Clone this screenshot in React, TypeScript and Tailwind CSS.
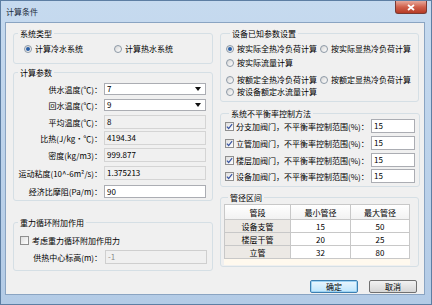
import React from 'react';

type FieldKind = 'combo' | 'edit' | 'ro' | 'disabled';

const Radio = ({ checked = false }: { checked?: boolean }) => (
  <span className="w-[8px] h-[8px] shrink-0 rounded-full border border-[#8d99a6] bg-gradient-to-br from-[#d6d6d6] to-white flex items-center justify-center">
    {checked && <span className="w-[4px] h-[4px] rounded-full bg-[#2a5fa6]" />}
  </span>
);

const CheckBox = ({ checked = false }: { checked?: boolean }) => (
  <span className="w-[9px] h-[9px] shrink-0 border border-[#8f8f8f] bg-gradient-to-br from-[#dedede] to-white flex items-center justify-center">
    {checked && (
      <svg viewBox="0 0 8 8" className="w-[7px] h-[7px]">
        <path d="M1 4.2 L3 6.3 L7 1.2" stroke="#3a56a3" strokeWidth="1.4" fill="none" />
      </svg>
    )}
  </span>
);

const Field = ({ value, kind, className = '' }: { value: string; kind: FieldKind; className?: string }) => {
  const look =
    kind === 'combo' || kind === 'edit'
      ? 'bg-white border-[#abadb3] text-black'
      : kind === 'ro'
        ? 'bg-[#f0f0f0] border-[#d4d4d4] text-black'
        : 'bg-[#f0f0f0] border-[#cfcfcf] text-[#8a8a8a]';
  return (
    <div className={`border flex items-center pl-[2px] pr-[4px] ${look} ${className}`}>
      <span className="flex-1 leading-[10px]">{value}</span>
      {kind === 'combo' && (
        <svg viewBox="0 0 6 4" className="w-[6px] h-[4px]">
          <path d="M0 0 H6 L3 4 Z" fill="#111" />
        </svg>
      )}
    </div>
  );
};

const Group = ({ title, className = '', children }: { title: string; className?: string; children?: React.ReactNode }) => (
  <fieldset className={`border border-[#d5dfe5] rounded-[3px] ${className}`}>
    <legend className="ml-[4px] px-[2px] leading-[11px]">{title}</legend>
    {children}
  </fieldset>
);

const params = [
  { label: '供水温度(℃)：', value: '7', kind: 'combo' as FieldKind, mt: 'mt-[5px]', h: 'h-[12px]' },
  { label: '回水温度(℃)：', value: '9', kind: 'combo' as FieldKind, mt: 'mt-[4px]', h: 'h-[12px]' },
  { label: '平均温度(℃)：', value: '8', kind: 'ro' as FieldKind, mt: 'mt-[4px]', h: 'h-[14px]' },
  { label: '比热(J/kg·℃)：', value: '4194.34', kind: 'ro' as FieldKind, mt: 'mt-[2px]', h: 'h-[14px]' },
  { label: '密度(kg/m3)：', value: '999.877', kind: 'ro' as FieldKind, mt: 'mt-[3px]', h: 'h-[14px]' },
  { label: '运动粘度(10^-6m²/s)：', value: '1.375213', kind: 'ro' as FieldKind, mt: 'mt-[4px]', h: 'h-[14px]' },
  { label: '经济比摩阻(Pa/m)：', value: '90', kind: 'edit' as FieldKind, mt: 'mt-[5px]', h: 'h-[13px]' },
];

const valves = [
  { name: '分支加阀门', mt: 'mt-0' },
  { name: '立管加阀门', mt: 'mt-[3px]' },
  { name: '楼层加阀门', mt: 'mt-[3px]' },
  { name: '设备加阀门', mt: 'mt-[2px]' },
];

const pipes = [
  { seg: '设备支管', min: '15', max: '50' },
  { seg: '楼层干管', min: '20', max: '25' },
  { seg: '立管', min: '32', max: '80' },
];

export default function App() {
  return (
    <div className="w-[432px] h-[305px] border border-[#5d7ea3] bg-gradient-to-b from-[#c6daef] to-[#b3cbe6] flex flex-col text-[8px] text-black font-['Noto_Sans_CJK_SC','Noto_Sans',sans-serif]">
      {/* Title bar */}
      <div className="h-[21px] flex items-start justify-between shrink-0">
        <span className="ml-[5px] mt-[5px] leading-[11px] text-[#1b2a3c]">计算条件</span>
        <div className="w-[32px] h-[13px] mr-[4px] rounded-b-[3px] border border-t-0 border-[#7a3a33] bg-gradient-to-b from-[#e6a89b] via-[#d0604b] to-[#b63a25] flex items-center justify-center">
          <svg viewBox="0 0 8 7" className="w-[8px] h-[7px]">
            <path d="M1 1 L7 6 M7 1 L1 6" stroke="white" strokeWidth="1.8" />
          </svg>
        </div>
      </div>

      {/* Client area */}
      <div className="flex-1 ml-[4px] mr-[6px] mb-[9px] border border-[#8aa4c2] bg-[#f0f0f0] flex pt-[5px] pl-[7px] gap-[7px]">
        {/* Left column */}
        <div className="w-[200px] flex flex-col">
          <Group title="系统类型" className="h-[36px]">
            <div className="mt-[4px] flex items-center leading-[11px] pl-[10px]">
              <div className="w-[90px] flex items-center gap-[3px]">
                <Radio checked />
                <span>计算冷水系统</span>
              </div>
              <div className="flex items-center gap-[3px]">
                <Radio />
                <span>计算热水系统</span>
              </div>
            </div>
          </Group>

          <Group title="计算参数" className="h-[134px] mt-[3px]">
            {params.map((p) => (
              <div key={p.label} className={`flex items-center ${p.mt}`}>
                <span className="w-[88px] text-right whitespace-nowrap leading-[11px] flex justify-end">{p.label}</span>
                <Field value={p.value} kind={p.kind} className={`ml-[2px] w-[102px] ${p.h}`} />
              </div>
            ))}
          </Group>

          <Group title="重力循环附加作用" className="h-[54px] mt-[16px]">
            <div className="mt-[7px] ml-[6px] flex items-center gap-[3px] leading-[11px]">
              <CheckBox />
              <span>考虑重力循环附加作用力</span>
            </div>
            <div className="mt-[4px] flex items-center">
              <span className="w-[88px] text-right leading-[11px]">供热中心标高(m)：</span>
              <Field value="-1" kind="disabled" className="ml-[3px] w-[102px] h-[14px]" />
            </div>
          </Group>
        </div>

        {/* Right column */}
        <div className="w-[199px] flex flex-col">
          <Group title="设备已知参数设置" className="h-[74px] px-[5px]">
            <div className="mt-[4px] flex items-center leading-[11px]">
              <div className="w-[94px] flex items-center gap-[3px]">
                <Radio checked />
                <span>按实际全热冷负荷计算</span>
              </div>
              <div className="flex items-center gap-[3px]">
                <Radio />
                <span>按实际显热冷负荷计算</span>
              </div>
            </div>
            <div className="mt-[3px] flex items-center gap-[3px] leading-[11px]">
              <Radio />
              <span>按实际流量计算</span>
            </div>
            <div className="mt-[6px] flex items-center leading-[11px]">
              <div className="w-[94px] flex items-center gap-[3px]">
                <Radio />
                <span>按额定全热冷负荷计算</span>
              </div>
              <div className="flex items-center gap-[3px]">
                <Radio />
                <span>按额定显热冷负荷计算</span>
              </div>
            </div>
            <div className="mt-[1px] flex items-center gap-[3px] leading-[11px]">
              <Radio />
              <span>按设备额定水流量计算</span>
            </div>
          </Group>

          <Group title="系统不平衡率控制方法" className="h-[79px] mt-[6px] px-[4px]">
            {valves.map((v) => (
              <div key={v.name} className={`flex items-center ${v.mt}`}>
                <CheckBox checked />
                <span className="ml-[2px] w-[134px] whitespace-nowrap leading-[11px]">{v.name}，不平衡率控制范围(%)：</span>
                <Field value="15" kind="edit" className="ml-[1px] w-[44px] h-[14px]" />
              </div>
            ))}
          </Group>

          <Group title="管径区间" className="h-[75px] mt-[5px] px-[3px]">
            <div className="mt-[1px] w-[186px] h-[61px] bg-[#fff9ee]">
              <table className="w-[186px] border-collapse text-center leading-[11px]">
                <thead>
                  <tr className="h-[15px] bg-gradient-to-b from-white to-[#f1f1f1]">
                    <th className="w-[66px] border border-[#c8c8c8] font-normal">管段</th>
                    <th className="w-[60px] border border-[#c8c8c8] font-normal">最小管径</th>
                    <th className="border border-[#c8c8c8] font-normal">最大管径</th>
                  </tr>
                </thead>
                <tbody>
                  {pipes.map((r) => (
                    <tr key={r.seg} className="h-[13px]">
                      <td className="border border-[#c8c8c8] bg-[#ece9e5]">{r.seg}</td>
                      <td className="border border-[#c8c8c8] bg-white">{r.min}</td>
                      <td className="border border-[#c8c8c8] bg-white">{r.max}</td>
                    </tr>
                  ))}
                </tbody>
              </table>
            </div>
          </Group>

          <div className="mt-[13px] flex justify-end gap-[11px] pr-[2px]">
            <button className="w-[48px] h-[13px] rounded-[2px] border border-[#3c7fb1] bg-gradient-to-b from-[#eaf6fd] to-[#bee6fd] leading-[11px] shadow-[inset_0_0_0_1px_#9ed3f3]">
              确定
            </button>
            <button className="w-[48px] h-[13px] rounded-[2px] border border-[#707070] bg-gradient-to-b from-[#f2f2f2] to-[#d6d6d6] leading-[11px]">
              取消
            </button>
          </div>
        </div>
      </div>
    </div>
  );
}
